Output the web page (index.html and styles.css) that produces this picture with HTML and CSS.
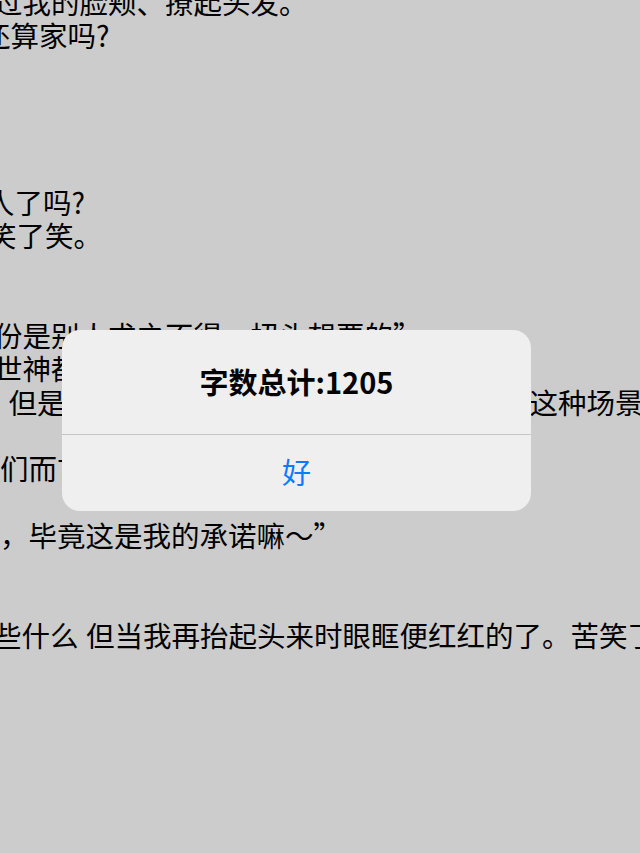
FILE: index.html
```html
<!DOCTYPE html>
<html lang="zh-CN">
<head>
<meta charset="utf-8">
<title>字数总计</title>
<link rel="stylesheet" href="styles.css">
</head>
<body>
<main class="page">
  <section class="para">
    <div class="ln o-6">过我的脸颊、撩起头发。</div>
    <div class="ln o-18">还算家吗?</div>
  </section>
  <section class="para gap4">
    <div class="ln o-14">人了吗?</div>
    <div class="ln o-12">笑了笑。</div>
  </section>
  <section class="para gap2">
    <div class="ln o-6">份是别人求之不得、扭头想要的”</div>
    <div class="ln o-6">世神都不会再多看一眼的平凡日子</div>
    <div class="ln o-20">，但是<span class="hidden-run">我们从来都不曾想过会有一天真的面对</span>这种场景吗</div>
  </section>
  <section class="para gap1">
    <div class="ln o-0">们而言</div>
  </section>
  <section class="para gap1">
    <div class="ln o-0">，毕竟这是我的承诺嘛～”</div>
  </section>
  <section class="para gap2">
    <div class="ln o-7">些什么 但当我再抬起头来时眼眶便红红的了。苦笑了</div>
  </section>
</main>

<div class="alert" role="alertdialog">
  <div class="alert-title">字数总计:1205</div>
  <div class="alert-btn">好</div>
</div>
</body>
</html>
```

FILE: styles.css
```css
html, body {
  margin: 0;
  padding: 0;
  width: 640px;
  height: 853px;
  overflow: hidden;
  background: #cccccc;
}

body {
  position: relative;
  font-family: "Noto Sans CJK SC", "Noto Sans", sans-serif;
  color: #000;
}

.page {
  margin-top: -15px;
  font-size: 28.5px;
  line-height: 33.3px;
  overflow: hidden;
}

.para {
  display: flex;
  flex-direction: column;
}

.gap1 { margin-top: 33.3px; }
.gap2 { margin-top: 66.6px; }
.gap4 { margin-top: 133.2px; }

.ln {
  white-space: nowrap;
  word-spacing: 1px;
}

.o-0 { margin-left: 0; }
.o-6 { margin-left: -6px; }
.o-7 { margin-left: -7px; }
.o-12 { margin-left: -12px; }
.o-14 { margin-left: -14px; }
.o-18 { margin-left: -18px; }
.o-20 { margin-left: -20px; }

.hidden-run {
  display: inline-block;
  width: 464px;
  overflow: hidden;
  vertical-align: top;
  white-space: nowrap;
}

.alert {
  position: absolute;
  left: 62px;
  top: 330px;
  width: 469px;
  height: 181px;
  border-radius: 18px;
  background: #efefef;
  display: flex;
  flex-direction: column;
  overflow: hidden;
}

.alert-title {
  height: 102px;
  padding-bottom: 2px;
  display: flex;
  align-items: center;
  justify-content: center;
  font-size: 29px;
  font-weight: 700;
  color: #000;
  border-bottom: 1px solid #c6c6c6;
}

.alert-btn {
  flex: 1;
  display: flex;
  align-items: center;
  justify-content: center;
  padding-bottom: 4px;
  font-size: 29px;
  color: #0a7aff;
}
```
